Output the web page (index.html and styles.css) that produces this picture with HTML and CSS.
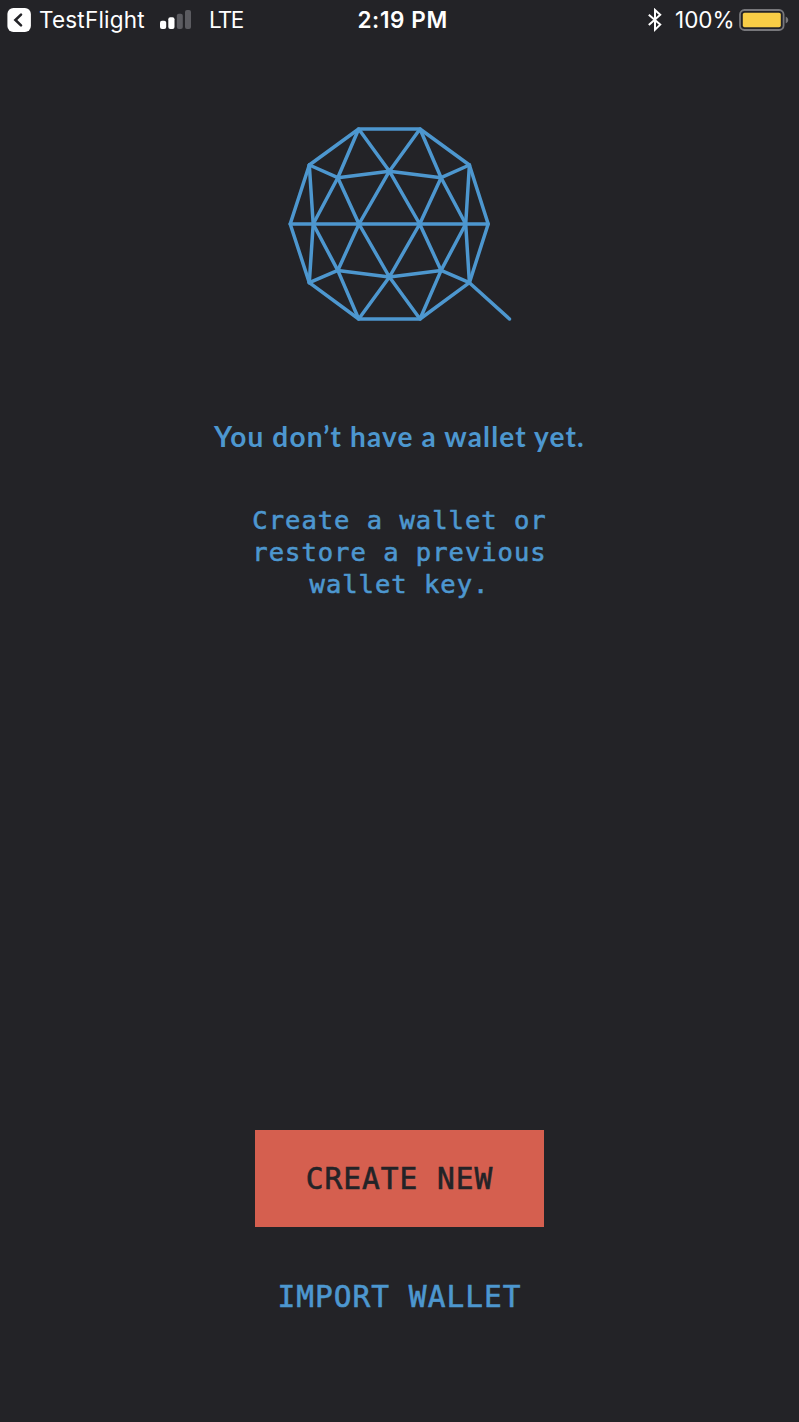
FILE: index.html
```html
<!DOCTYPE html>
<html lang="en">
<head>
<meta charset="utf-8">
<title>Wallet</title>
<link rel="stylesheet" href="styles.css">
</head>
<body>
<div class="screen">
  <header class="status">
    <div class="status-left">
      <svg class="back" width="24" height="24" viewBox="0 0 24 24"><rect x=".4" width="23.5" height="24" rx="6" fill="#fff"/><path d="M14 6.6 8.4 12l5.6 5.4" fill="none" stroke="#232327" stroke-width="2.6" stroke-linecap="round"/></svg>
      <span class="app">TestFlight</span>
      <svg class="signal" width="32" height="20" viewBox="0 0 32 20"><g fill="#fff"><rect y="10.8" width="6.2" height="8.2" rx="2"/><rect x="8.3" y="7.2" width="6.2" height="11.8" rx="2"/></g><g fill="#5b5b60"><rect x="16.8" y="3.7" width="6" height="15.3" rx="2"/><rect x="25" y="0" width="6" height="19" rx="2"/></g></svg>
      <span class="carrier">LTE</span>
    </div>
    <div class="time">2:19 PM</div>
    <div class="status-right">
      <svg class="bluetooth" width="14" height="24" viewBox="0 0 14 24"><path d="M.8 6.8 12.2 16.6 7 21.6V2l5.2 4.8L.8 17" fill="none" stroke="#fff" stroke-width="2"/></svg>
      <span class="percent">100%</span>
      <svg class="battery" width="50" height="22" viewBox="0 0 50 22"><rect x="1" y="1" width="43.6" height="20" rx="4.5" fill="none" stroke="#77777b" stroke-width="1.8"/><rect x="3.8" y="3.8" width="38" height="14.4" rx="1.8" fill="#f9ce46"/><path d="M46.7 7.5q2.6 1.1 2.6 3.5t-2.6 3.5z" fill="#77777b"/></svg>
    </div>
  </header>
  <main class="content">
    <svg class="logo" width="240" height="212" viewBox="0 0 240 212"><g fill="none" stroke="#4d97cf" stroke-width="3.5" stroke-linejoin="round" stroke-linecap="round">
      <path d="M78.7 11h61.3l49.4 36 18.8 59-18.8 58.7-49.4 36.3H78.7l-49.4-36.3L10.2 106 29.3 47z"/>
      <path d="M10.2 106h198M29.3 47l3.9 59-3.9 58.7M189.4 47l-3.7 59 3.7 58.7 40.1 36.3"/>
      <path d="M29.3 47 57.8 59.7l51.6-6.5 51.7 6.5L189.4 47M29.3 164.7 57.8 152.4l51.6 6.6 51.7-6.6 28.3 12.3"/>
      <path d="M78.7 11 57.8 59.7 33.2 106 57.8 152.4 78.7 201l30.7-42 30.6 42 21.1-48.6 24.6-46.4-24.6-46.3L140 11l-30.6 42.2z"/>
      <path d="m57.8 59.7 21.2 46.3-21.2 46.4M109.4 53.2 79 106l30.4 53 30.3-53zM161.1 59.7 139.7 106l21.4 46.4"/>
    </g></svg>
    <h1 class="title">You don’t have a wallet yet.</h1>
    <p class="message">Create a wallet or<br>restore a previous<br>wallet key.</p>
  </main>
  <footer class="actions">
    <button class="create">CREATE NEW</button>
    <button class="import">IMPORT WALLET</button>
  </footer>
</div>
</body>
</html>
```
FILE: styles.css
```css
* { box-sizing: border-box; }
body { margin: 0; background: #232327; }
.screen { width: 799px; height: 1422px; display: flex; flex-direction: column; background: #232327; }
.status { height: 40px; flex: none; display: grid; grid-template-columns: 1fr auto 1fr; align-items: center; color: #fff; font: 400 22.5px/40px Inter, "Liberation Sans", sans-serif; padding: 0 10px 0 7px; white-space: nowrap; }
.status-left, .status-right { display: flex; align-items: center; height: 40px; }
.status-right { justify-content: flex-end; }
.app { width: 106px; margin-left: 8px; letter-spacing: .2px; }
.signal { margin-left: 15px; }
.carrier { margin-left: 17px; letter-spacing: -1.7px; }
.time { font-weight: 600; width: 90px; margin-left: 9px; letter-spacing: .6px; }
.bluetooth { margin-right: 13px; }
.percent { width: 59px; letter-spacing: 0; }
.battery { margin-left: 5px; }
.content { flex: 1; display: flex; flex-direction: column; align-items: center; padding-top: 78px; }
.logo { display: block; }
.title { margin: 86px 0 0; color: #4d97cf; font: 700 28px/40px Lato, sans-serif; letter-spacing: 1.15px; white-space: nowrap; }
.message { margin: 48px 0 0; color: #4d97cf; font: 400 25.5px/32px "DejaVu Sans Mono", monospace; letter-spacing: 1px; text-align: center; -webkit-text-stroke: .6px currentColor; }
.actions { display: flex; flex-direction: column; align-items: center; padding-bottom: 105px; }
.actions button { border: 0; padding: 0; background: none; font: 400 29.5px/40px "DejaVu Sans Mono", monospace; letter-spacing: 1px; -webkit-text-stroke: .6px currentColor; }
.actions .create { width: 289px; height: 97px; background: #d55f4f; color: #232327; }
.actions .import { margin-top: 50px; height: 40px; color: #4d97cf; }
```
